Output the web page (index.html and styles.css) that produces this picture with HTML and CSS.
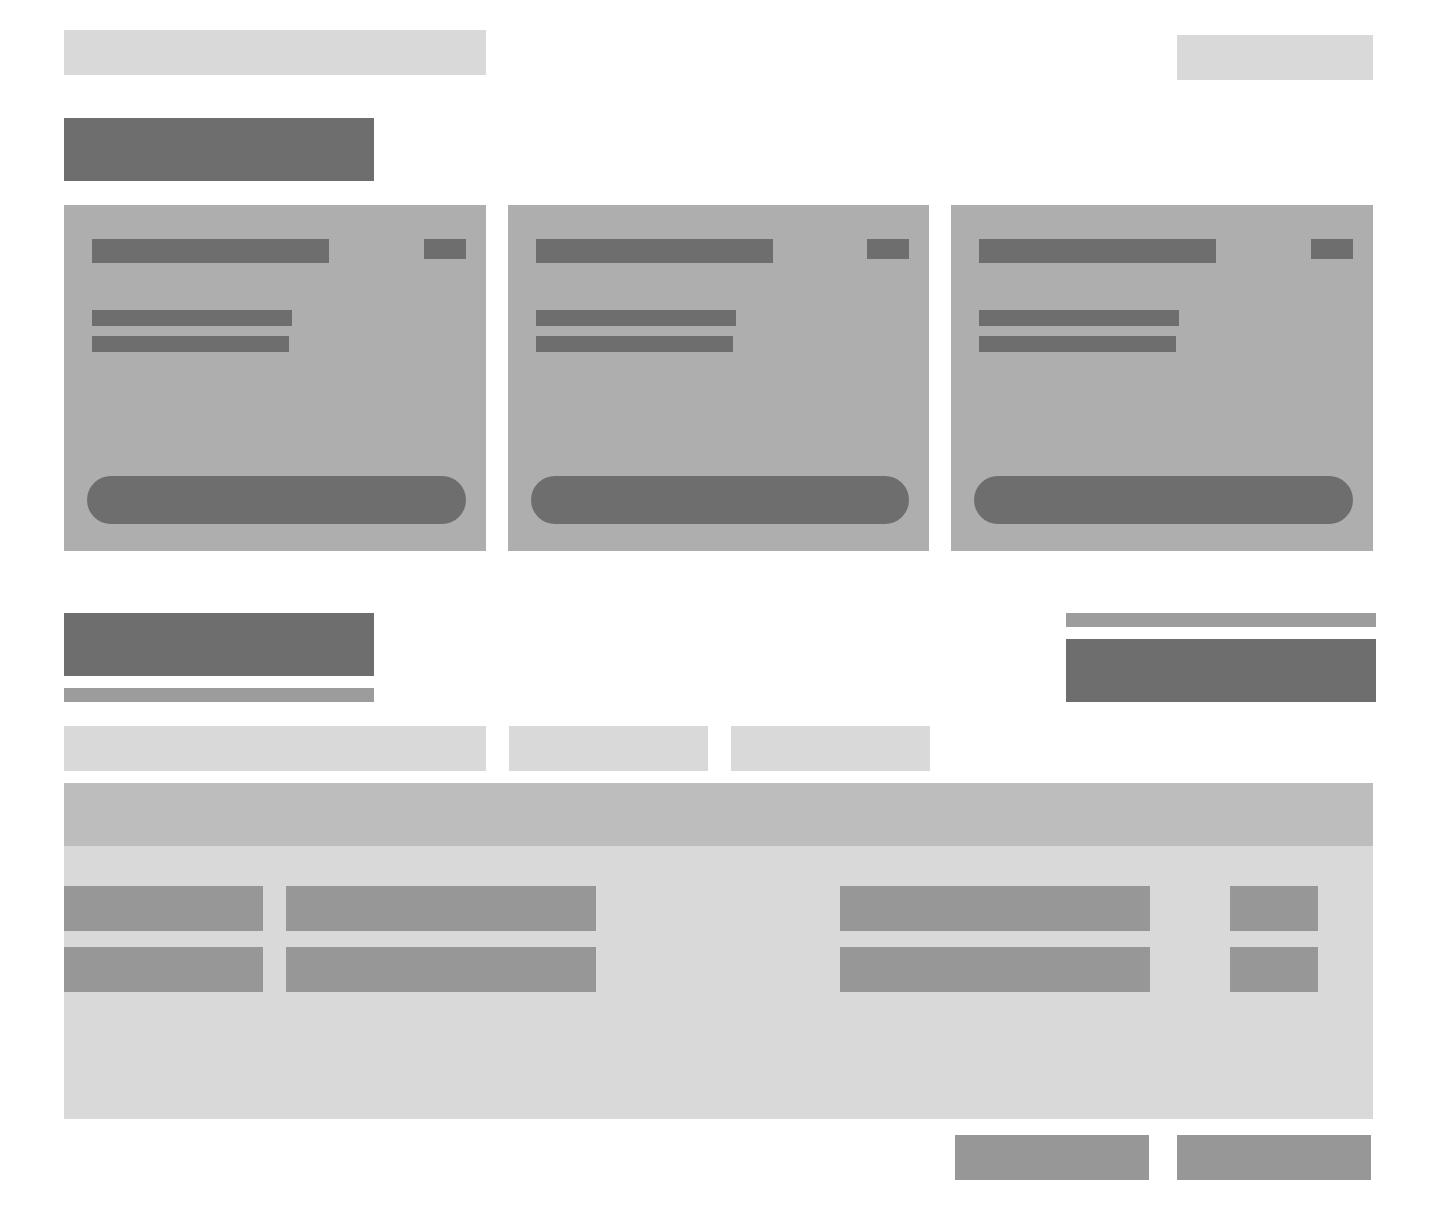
FILE: index.html
```html
<!DOCTYPE html>
<html lang="en">
<head>
    <meta charset="UTF-8">
    <meta name="viewport" content="width=device-width, initial-scale=1.0">
    <title>Dashboard</title>
    <link rel="stylesheet" href="styles.css">
</head>
<body>
    <header class="header">
        <a class="logo" href="#" aria-label="Home"></a>
        <button class="account" type="button" aria-label="Account"></button>
    </header>
    <main>
        <section class="section">
            <h1 class="title" aria-label="Overview"></h1>
            <div class="cards">
                <article class="card">
                    <div class="card-head">
                        <div class="card-title"></div>
                        <div class="tag"></div>
                    </div>
                    <div class="card-text">
                        <div class="line"></div>
                        <div class="line short"></div>
                    </div>
                    <button class="card-button" type="button" aria-label="Open"></button>
                </article>
                <article class="card">
                    <div class="card-head">
                        <div class="card-title"></div>
                        <div class="tag"></div>
                    </div>
                    <div class="card-text">
                        <div class="line"></div>
                        <div class="line short"></div>
                    </div>
                    <button class="card-button" type="button" aria-label="Open"></button>
                </article>
                <article class="card">
                    <div class="card-head">
                        <div class="card-title"></div>
                        <div class="tag"></div>
                    </div>
                    <div class="card-text">
                        <div class="line"></div>
                        <div class="line short"></div>
                    </div>
                    <button class="card-button" type="button" aria-label="Open"></button>
                </article>
            </div>
        </section>

        <div class="list-header">
            <div class="heading">
                <h2 class="title" aria-label="List"></h2>
                <div class="caption"></div>
            </div>
            <div class="heading">
                <div class="caption"></div>
                <div class="title"></div>
            </div>
        </div>

        <section class="section">
            <form class="filters">
                <input class="filter search" type="search" aria-label="Search">
                <select class="filter" aria-label="Category"></select>
                <select class="filter" aria-label="Status"></select>
            </form>
            <div class="panel">
                <table class="table">
                    <colgroup>
                        <col class="col-id">
                        <col>
                        <col class="col-detail">
                        <col class="col-action">
                    </colgroup>
                    <thead>
                        <tr>
                            <th></th>
                            <th></th>
                            <th></th>
                            <th></th>
                        </tr>
                    </thead>
                    <tbody>
                        <tr>
                            <td><div class="cell small"></div></td>
                            <td><div class="cell"></div></td>
                            <td><div class="cell"></div></td>
                            <td><button class="cell action" type="button" aria-label="Edit"></button></td>
                        </tr>
                        <tr>
                            <td><div class="cell small"></div></td>
                            <td><div class="cell"></div></td>
                            <td><div class="cell"></div></td>
                            <td><button class="cell action" type="button" aria-label="Edit"></button></td>
                        </tr>
                    </tbody>
                </table>
            </div>
            <nav class="pagination">
                <button class="page-button" type="button" aria-label="Previous"></button>
                <button class="page-button" type="button" aria-label="Next"></button>
            </nav>
        </section>
    </main>
</body>
</html>
```
FILE: styles.css
```css
* {
    box-sizing: border-box;
}

body {
    font-family: "Liberation Sans", Arial, sans-serif;
    background-color: #fff;
    margin: 0;
    padding: 30px 0 47px;
}

button, input, select {
    appearance: none;
    border: none;
    border-radius: 0;
    margin: 0;
    padding: 0;
}

.header {
    display: flex;
    justify-content: space-between;
    height: 50px;
    margin-bottom: 38px;
    padding: 0 67px 0 64px;
}

.logo {
    width: 422px;
    height: 45px;
    background-color: #d9d9d9;
}

.account {
    align-self: flex-end;
    width: 196px;
    height: 45px;
    background-color: #d9d9d9;
}

.section {
    padding: 0 67px 0 64px;
}

.title {
    width: 310px;
    height: 63px;
    margin: 0;
    background-color: #6e6e6e;
}

/* Cards */
.cards {
    display: grid;
    grid-template-columns: repeat(3, 1fr);
    gap: 22px;
    margin-top: 24px;
}

.card {
    display: flex;
    flex-direction: column;
    min-height: 346px;
    padding: 34px 20px 27px 23px;
    background-color: #aeaeae;
}

.card-head {
    display: flex;
    justify-content: space-between;
    align-items: flex-start;
    padding-left: 5px;
}

.card-title {
    width: 237px;
    height: 24px;
    background-color: #6e6e6e;
}

.tag {
    width: 42px;
    height: 20px;
    background-color: #6e6e6e;
}

.card-text {
    display: flex;
    flex-direction: column;
    gap: 10px;
    margin-top: 47px;
    padding-left: 5px;
}

.line {
    width: 200px;
    height: 16px;
    background-color: #6e6e6e;
}

.line.short {
    width: 197px;
}

.card-button {
    width: 100%;
    height: 48px;
    margin-top: auto;
    border-radius: 24px;
    background-color: #6e6e6e;
}

/* List */
.list-header {
    display: flex;
    justify-content: space-between;
    margin: 62px 0 24px;
    padding: 0 64px;
}

.heading {
    display: flex;
    flex-direction: column;
    gap: 12px;
}

.caption {
    width: 310px;
    height: 14px;
    background-color: #9c9c9c;
}

.filters {
    display: flex;
    gap: 23px;
    margin-bottom: 12px;
}

.filter {
    width: 199px;
    height: 45px;
    background-color: #d9d9d9;
}

.filter.search {
    width: 422px;
}

.panel {
    padding-bottom: 111px;
    background-color: #d9d9d9;
}

.table {
    width: 100%;
    table-layout: fixed;
    border-collapse: collapse;
}

.col-id {
    width: 222px;
}

.col-detail {
    width: 390px;
}

.col-action {
    width: 143px;
}

.table th {
    height: 63px;
    padding: 0;
    background-color: #bdbdbd;
}

.table td {
    padding: 0 0 16px;
}

.table tbody tr:first-child td {
    padding-top: 40px;
}

.cell {
    display: block;
    width: 310px;
    height: 45px;
    background-color: #979797;
}

.cell.small {
    width: 199px;
}

.cell.action {
    width: 88px;
}

.pagination {
    display: flex;
    justify-content: flex-end;
    gap: 28px;
    margin-top: 16px;
    padding-right: 2px;
}

.page-button {
    width: 194px;
    height: 45px;
    background-color: #979797;
}
```
